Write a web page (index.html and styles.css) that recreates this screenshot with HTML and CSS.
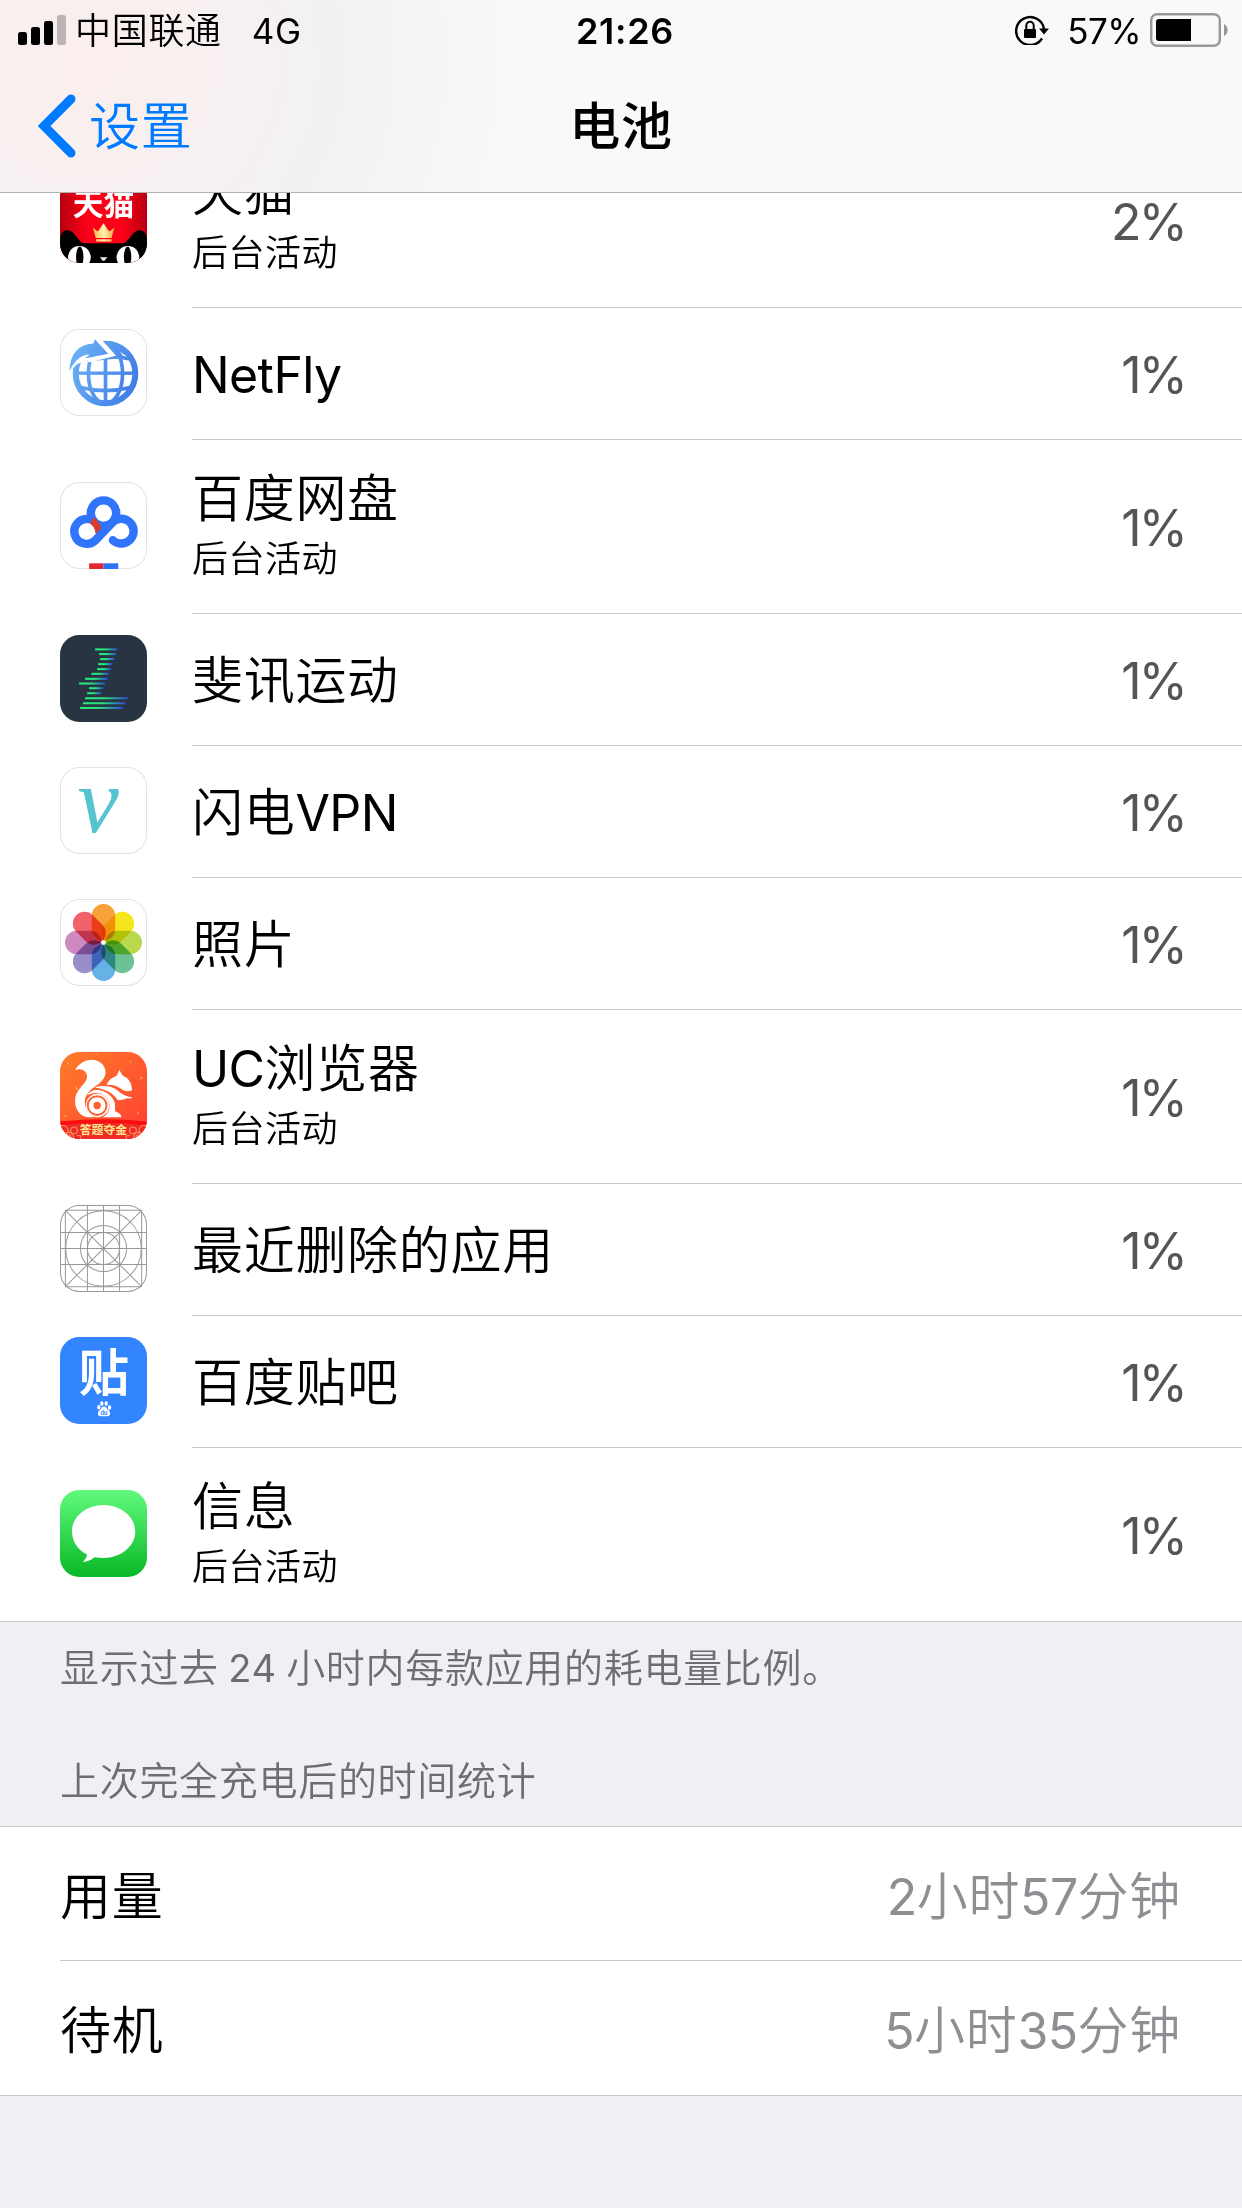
FILE: index.html
```html
<!DOCTYPE html>
<html lang="zh-CN">
<head>
    <meta charset="UTF-8">
    <meta name="viewport" content="width=device-width, initial-scale=1.0">
    <title>电池</title>
    <link rel="stylesheet" href="styles.css">
</head>
<body>
    <header class="header">
        <div class="status-bar">
            <div class="status-left">
                <svg class="signal" viewBox="0 0 48 30">
                    <rect x="0" y="17" width="9" height="13" rx="2.5"/>
                    <rect x="13" y="12" width="9" height="18" rx="2.5"/>
                    <rect x="26" y="6" width="9" height="24" rx="2.5"/>
                    <rect x="39" y="0" width="9" height="30" rx="2.5" fill="#bdb5b5"/>
                </svg>
                <span class="carrier">中国联通</span>
                <span class="network">4G</span>
            </div>
            <div class="status-time">21:26</div>
            <div class="status-right">
                <svg class="lock" viewBox="0 0 34 30">
                    <path d="M27 23.5A14 14 0 1 1 29 14" fill="none" stroke="#000" stroke-width="2.4"/>
                    <path d="M24 13.5h10l-5 6z"/>
                    <rect x="9" y="14" width="12" height="9" rx="1"/>
                    <path d="M11.3 14v-3.5a3.7 3.7 0 0 1 7.4 0V14" fill="none" stroke="#000" stroke-width="2"/>
                </svg>
                <span class="battery-text">57%</span>
                <svg class="battery" viewBox="0 0 78 34">
                    <rect x="1.2" y="1.2" width="68.6" height="31.6" rx="6" fill="none" stroke="#999" stroke-width="2.4"/>
                    <path d="M6 9a3 3 0 0 1 3-3h32v22H9a3 3 0 0 1-3-3z"/>
                    <path d="M74 11q3.6 2 3.6 6t-3.6 6z" fill="#999"/>
                </svg>
            </div>
        </div>
        <nav class="nav-bar">
            <a class="back">
                <svg class="chevron" viewBox="0 0 38 64">
                    <path d="M33 5L6 32l27 27" fill="none" stroke="#007aff" stroke-width="9" stroke-linecap="round"/>
                </svg>
                <span>设置</span>
            </a>
            <h1 class="nav-title">电池</h1>
        </nav>
    </header>

    <ul class="app-list">
        <li class="app app-tall">
            <svg class="icon" viewBox="0 0 260 260">
                <defs>
                    <linearGradient id="tmall">
                        <stop offset="0" stop-color="#b5000f"/>
                        <stop offset=".3" stop-color="#fb0016"/>
                        <stop offset=".72" stop-color="#fb0016"/>
                        <stop offset="1" stop-color="#b5000f"/>
                    </linearGradient>
                    <linearGradient id="gold" x2="1">
                        <stop offset="0" stop-color="#f6b545"/>
                        <stop offset=".5" stop-color="#fff3b0"/>
                        <stop offset="1" stop-color="#f0a53a"/>
                    </linearGradient>
                    <clipPath id="round"><rect width="260" height="260" rx="58"/></clipPath>
                </defs>
                <g clip-path="url(#round)">
                    <rect width="260" height="260" fill="url(#tmall)"/>
                    <text x="38" y="118" class="tmall-text">天猫</text>
                    <path d="M98 154l15 12 17-25 17 25 16-12-9 31h-47zM108 189h46v7h-46z" fill="url(#gold)"/>
                    <path d="M0 190Q2 162 22 162 34 161 48 180 63 201 72 201H188Q197 201 212 180 226 161 238 162 258 163 260 190V260H0z"/>
                    <circle cx="58" cy="243" r="34" fill="#fff"/>
                    <circle cx="203" cy="243" r="34" fill="#fff"/>
                    <ellipse cx="59" cy="242" rx="11" ry="31"/>
                    <ellipse cx="202" cy="242" rx="11" ry="31"/>
                    <path d="M119 241q11 4 23 0l-8 11q-4 3-8 0z" fill="#eee"/>
                </g>
            </svg>
            <div class="app-body">
                <div class="app-text">
                    <div class="app-name">天猫</div>
                    <div class="app-sub">后台活动</div>
                </div>
                <span class="percent">2%</span>
            </div>
        </li>
        <li class="app">
            <svg class="icon" viewBox="0 0 260 260">
                <defs>
                    <linearGradient id="globe" gradientUnits="userSpaceOnUse" x1="28" y1="80" x2="234" y2="160">
                        <stop offset="0" stop-color="#6db3f6"/>
                        <stop offset="1" stop-color="#3f7be6"/>
                    </linearGradient>
                </defs>
                <rect class="edge" x="1.5" y="1.5" width="257" height="257" rx="57"/>
                <g fill="none" stroke="url(#globe)" stroke-width="11">
                    <circle cx="136" cy="133" r="89" stroke-width="18"/>
                    <ellipse cx="136" cy="133" rx="51" ry="90"/>
                    <rect x="130.500" y="40" width="11" height="186" fill="url(#globe)" stroke="none"/>
                    <rect x="44" y="127" width="184" height="10" fill="url(#globe)" stroke="none"/>
                    <path d="M58 174q78 20 156 0M60 90q78-18 154 0"/>
                </g>
                <path d="M130 37Q184 36 208 72l-14 14-80 8L60 94z" fill="url(#globe)"/>
                <path d="M180 68l20 14-12-2z" fill="#fff"/>
                <path d="M97 24L128 36 168 80 86 100 82 94Q46 98 26 136V100Q45 40 103 42z" fill="#fff"/>
                <path d="M104 31l40 43-69 14 14-12Q52 76 28 126 31 47 100 43z" fill="url(#globe)"/>
            </svg>
            <div class="app-body">
                <div class="app-text">
                    <div class="app-name"><span class="latin">NetFly</span></div>
                </div>
                <span class="percent">1%</span>
            </div>
        </li>
        <li class="app app-tall">
            <svg class="icon" viewBox="0 0 260 260">
                <rect class="edge" x="1.5" y="1.5" width="257" height="257" rx="57"/>
                <g fill="none" stroke="#2f74fb" stroke-width="25" stroke-linecap="round">
                    <circle cx="130" cy="93" r="38"/>
                    <path d="M91 114Q112 122 116 152" stroke="#dc3b27" stroke-width="20" stroke-linecap="butt"/>
                    <path d="M84 111A37 37 0 1 0 106 174L154 124A37 37 0 1 1 158 174"/>
                </g>
                <path d="M87 243h43v17H87z" fill="#e32631"/>
                <path d="M130 243h44v17h-44z" fill="#2f70f8"/>
            </svg>
            <div class="app-body">
                <div class="app-text">
                    <div class="app-name">百度网盘</div>
                    <div class="app-sub">后台活动</div>
                </div>
                <span class="percent">1%</span>
            </div>
        </li>
        <li class="app">
            <svg class="icon" viewBox="0 0 260 260">
                <defs>
                    <linearGradient id="bar">
                        <stop offset="0" stop-color="#20f576"/>
                        <stop offset=".45" stop-color="#2be07e"/>
                        <stop offset="1" stop-color="#2a4bd8"/>
                    </linearGradient>
                </defs>
                <rect width="260" height="260" rx="58" fill="#283442"/>
                <g fill="url(#bar)">
                    <rect x="105" y="40" width="66" height="6"/>
                    <rect x="117" y="54" width="51" height="6"/>
                    <rect x="120" y="69" width="42" height="6"/>
                    <rect x="114" y="84" width="42" height="6"/>
                    <rect x="111" y="99" width="42" height="6"/>
                    <rect x="94" y="113" width="51" height="6"/>
                    <rect x="75" y="128" width="67" height="6"/>
                    <rect x="57" y="142" width="78" height="6"/>
                    <rect x="87" y="156" width="42" height="6"/>
                    <rect x="81" y="171" width="42" height="6"/>
                    <rect x="75" y="186" width="127" height="6"/>
                    <rect x="69" y="201" width="127" height="6"/>
                    <rect x="60" y="215" width="127" height="6"/>
                </g>
            </svg>
            <div class="app-body">
                <div class="app-text">
                    <div class="app-name">斐讯运动</div>
                </div>
                <span class="percent">1%</span>
            </div>
        </li>
        <li class="app">
            <svg class="icon" viewBox="0 0 260 260">
                <rect class="edge" x="1.5" y="1.5" width="257" height="257" rx="57"/>
                <text x="52" y="193" class="vpn-text">ν</text>
            </svg>
            <div class="app-body">
                <div class="app-text">
                    <div class="app-name">闪电<span class="latin">VPN</span></div>
                </div>
                <span class="percent">1%</span>
            </div>
        </li>
        <li class="app">
            <svg class="icon" viewBox="0 0 260 260">
                <rect class="edge" x="1.5" y="1.5" width="257" height="257" rx="57"/>
                <g class="petals">
                    <rect x="95" y="15" width="70" height="110" rx="35" fill="#f9a23b"/>
                    <rect x="95" y="15" width="70" height="110" rx="35" fill="#f6e51e" transform="rotate(45 130 130)"/>
                    <rect x="95" y="15" width="70" height="110" rx="35" fill="#b9d84c" transform="rotate(90 130 130)"/>
                    <rect x="95" y="15" width="70" height="110" rx="35" fill="#6cc294" transform="rotate(135 130 130)"/>
                    <rect x="95" y="15" width="70" height="110" rx="35" fill="#66b2e6" transform="rotate(180 130 130)"/>
                    <rect x="95" y="15" width="70" height="110" rx="35" fill="#988fca" transform="rotate(225 130 130)"/>
                    <rect x="95" y="15" width="70" height="110" rx="35" fill="#cc8abf" transform="rotate(270 130 130)"/>
                    <rect x="95" y="15" width="70" height="110" rx="35" fill="#f2606a" transform="rotate(315 130 130)"/>
                </g>
                <circle cx="130" cy="130" r="7" fill="#fff"/>
            </svg>
            <div class="app-body">
                <div class="app-text">
                    <div class="app-name">照片</div>
                </div>
                <span class="percent">1%</span>
            </div>
        </li>
        <li class="app app-tall">
            <svg class="icon" viewBox="0 0 260 260">
                <defs>
                    <linearGradient id="uc" x2="1" y2="1">
                        <stop offset="0" stop-color="#ff7d28"/>
                        <stop offset="1" stop-color="#ff3d33"/>
                    </linearGradient>
                </defs>
                <g clip-path="url(#round)">
                    <rect width="260" height="260" fill="url(#uc)"/>
                    <g fill="#fff">
                        <path d="M45 54C61 25 101 12 125 35C148 60 132 84 112 98C88 113 73 130 74 151C75 173 89 188 104 195H84C62 192 45 174 45 147C45 119 65 105 77 87C89 66 72 45 45 54z"/>
                        <path d="M78 131C104 93 160 123 164 155C166 170 160 179 173 181Q183 186 183 195H128Q150 182 148 158C145 126 108 112 78 131z"/>
                        <path d="M139 98C149 76 160 77 170 70L177 53 187 70C207 78 216 96 215 115Q201 120 189 114C169 99 152 97 139 98z"/>
                        <path d="M103 106C139 95 165 106 179 121Q196 133 216 135Q213 141 200 138Q192 143 173 144C158 124 144 112 103 106z"/>
                        <circle cx="112" cy="160" r="35"/>
                    </g>
                    <circle cx="112" cy="160" r="18" fill="none" stroke="#fff" stroke-width="15"/>
                    <circle cx="111" cy="160" r="28" fill="none" stroke="#ff6030" stroke-width="6"/>
                    <circle cx="111" cy="160" r="11" fill="#ff6030"/>
                    <path d="M109 8l4-6-2 9zM21 28l7 8-4 2zM205 23l9 7-2 3zM242 72l5 8-7 2zM47 99l7 13h-7zM231 176l6 8-5 2zM13 191l8-4-5 9z" fill="#ffb35c"/>
                    <path d="M0 208Q130 194 260 208V260H0z" fill="#f80e12"/>
                    <path d="M0 219Q130 205 260 219V260H0z" fill="#ee2c27"/>
                    <g fill="none" stroke="#ff9661" stroke-width="3">
                        <circle cx="10" cy="234" r="14"/>
                        <circle cx="42" cy="234" r="10"/>
                        <circle cx="26" cy="254" r="14"/>
                        <circle cx="26" cy="254" r="7"/>
                        <circle cx="250" cy="234" r="14"/>
                        <circle cx="218" cy="234" r="10"/>
                        <circle cx="234" cy="254" r="14"/>
                        <circle cx="234" cy="254" r="7"/>
                        <path d="M50 250h12v12M210 250h-12v12"/>
                    </g>
                    <text x="59" y="245" class="uc-text">答题夺金</text>
                </g>
            </svg>
            <div class="app-body">
                <div class="app-text">
                    <div class="app-name"><span class="latin">UC</span>浏览器</div>
                    <div class="app-sub">后台活动</div>
                </div>
                <span class="percent">1%</span>
            </div>
        </li>
        <li class="app">
            <svg class="icon" viewBox="0 0 260 260">
                <g fill="none" stroke="#999" stroke-width="3">
                    <rect x="1.500" y="1.500" width="257" height="257" rx="57"/>
                    <path d="M16 16V244M82 2V258M130 2V258M178 2V258M244 16V244"/>
                    <path d="M16 16H244M2 82H258M2 130H258M2 178H258M16 244H244"/>
                    <path d="M16 16L244 244M244 16L16 244"/>
                    <circle cx="130" cy="130" r="113"/>
                    <circle cx="130" cy="130" r="69"/>
                    <circle cx="130" cy="130" r="48"/>
                </g>
            </svg>
            <div class="app-body">
                <div class="app-text">
                    <div class="app-name">最近删除的应用</div>
                </div>
                <span class="percent">1%</span>
            </div>
        </li>
        <li class="app">
            <svg class="icon" viewBox="0 0 260 260">
                <rect width="260" height="260" rx="58" fill="#3385ff"/>
                <text x="56" y="161" class="tieba-text">贴</text>
                <g fill="#fff">
                    <ellipse cx="116" cy="210" rx="5" ry="7"/>
                    <ellipse cx="125" cy="199" rx="5" ry="7"/>
                    <ellipse cx="138" cy="199" rx="5" ry="7"/>
                    <ellipse cx="148" cy="211" rx="5" ry="7"/>
                    <path d="M131 208q7 0 10 7 9 6 9 13 0 9-10 9h-17q-10 0-10-9 0-6 9-13 3-7 9-7z"/>
                </g>
                <text x="121" y="233" class="paw-text">du</text>
            </svg>
            <div class="app-body">
                <div class="app-text">
                    <div class="app-name">百度贴吧</div>
                </div>
                <span class="percent">1%</span>
            </div>
        </li>
        <li class="app app-tall app-last">
            <svg class="icon" viewBox="0 0 260 260">
                <defs>
                    <linearGradient id="msg" x2="0" y2="1">
                        <stop offset="0" stop-color="#60fa7c"/>
                        <stop offset="1" stop-color="#09b826"/>
                    </linearGradient>
                </defs>
                <rect width="260" height="260" rx="58" fill="url(#msg)"/>
                <path d="M130 45C182 45 225 80 225 124S182 203 130 203Q117 203 103 201 88 214 69 215 80 205 81 193C54 180 36 155 36 124 36 80 78 45 130 45z" fill="#fff"/>
            </svg>
            <div class="app-body">
                <div class="app-text">
                    <div class="app-name">信息</div>
                    <div class="app-sub">后台活动</div>
                </div>
                <span class="percent">1%</span>
            </div>
        </li>
    </ul>

    <p class="note">显示过去 <span class="note-num">24</span> 小时内每款应用的耗电量比例。</p>
    <h2 class="section-title">上次完全充电后的时间统计</h2>

    <div class="stats">
        <div class="stat">
            <span>用量</span>
            <span class="stat-value"><span class="latin">2</span>小时<span class="latin">57</span>分钟</span>
        </div>
        <div class="stat">
            <span>待机</span>
            <span class="stat-value"><span class="latin">5</span>小时<span class="latin">35</span>分钟</span>
        </div>
    </div>
</body>
</html>
```

FILE: styles.css
```css
* {
    margin: 0;
    padding: 0;
    box-sizing: border-box;
}
body {
    width: 1242px;
    height: 2208px;
    overflow: hidden;
    background: #efeff4;
    color: #000;
    font-family: "Noto Sans CJK SC", sans-serif;
    font-size: 51px;
    font-weight: 350;
    letter-spacing: 0.7px;
}
svg {
    display: block;
    flex-shrink: 0;
}
.latin {
    font-family: Inter, sans-serif;
    font-size: 50px;
    font-weight: 400;
    letter-spacing: -0.6px;
}

/* 顶部 */
.header {
    position: relative;
    z-index: 1;
    height: 193px;
    border-bottom: 1px solid #b2b2b2;
    background: radial-gradient(circle at 90px 60px, #fbeeee 0, #f8f0f0 120px, #f2f1f2 240px, rgba(249, 249, 249, 0) 430px), #f9f9f9;
}
.status-bar {
    display: grid;
    grid-template-columns: 1fr auto 1fr;
    align-items: center;
    height: 60px;
    padding: 0 14px 0 18px;
    font-size: 36px;
    line-height: 56px;
}
.status-left,
.status-right {
    display: flex;
    align-items: center;
}
.status-right {
    justify-content: flex-end;
}
.signal {
    width: 48px;
    height: 30px;
}
.carrier {
    margin-left: 9px;
    padding-bottom: 4px;
}
.network {
    margin-left: 30px;
    font-family: Inter, sans-serif;
    font-size: 35px;
    font-weight: 400;
    padding-top: 2px;
}
.status-time {
    padding: 1px 0 0 4px;
    font-family: Inter, sans-serif;
    font-size: 36px;
    font-weight: 600;
}
.lock {
    width: 34px;
    height: 30px;
}
.battery-text {
    margin: 0 9px 0 18px;
    padding-top: 2px;
    font-family: Inter, sans-serif;
    font-size: 35px;
    font-weight: 400;
    letter-spacing: -0.6px;
}
.battery {
    width: 78px;
    height: 34px;
    margin-bottom: 1px;
}
.nav-bar {
    display: grid;
    grid-template-columns: 1fr auto 1fr;
    align-items: center;
    height: 132px;
    padding: 0 38px;
    line-height: 126px;
}
.back {
    display: flex;
    align-items: center;
    gap: 13px;
    color: #007aff;
}
.back span,
.nav-title {
    padding-bottom: 6px;
}
.chevron {
    width: 38px;
    height: 64px;
}
.nav-title {
    font-size: 51px;
    font-weight: 500;
}

/* 应用耗电列表 */
.app-list {
    margin-top: -59px;
    list-style: none;
    background: #fff;
    border-bottom: 1px solid #c8c7cc;
}
.app {
    display: flex;
    height: 132px;
    padding-left: 60px;
}
.app-tall {
    height: 174px;
}
.app-last {
    height: 173px;
}
.icon {
    width: 87px;
    height: 87px;
    margin-top: 21px;
    overflow: visible;
}
.app-tall .icon {
    margin-top: 42px;
}
.edge {
    fill: #fff;
    stroke: #e3e3e3;
    stroke-width: 3;
}
.app-body {
    flex: 1;
    display: flex;
    align-items: center;
    justify-content: space-between;
    margin-left: 45px;
    padding-right: 57px;
    border-bottom: 1px solid #c8c7cc;
}
.app-last .app-body {
    border-bottom: none;
}
.app-text {
    padding-bottom: 5px;
}
.app-tall .app-text {
    padding-bottom: 10px;
}
.app-name {
    height: 66px;
    line-height: 66px;
}
.app-sub {
    height: 50px;
    margin-top: 3px;
    font-size: 36px;
    line-height: 50px;
    letter-spacing: 0.5px;
}
.percent {
    padding-top: 3px;
    color: #555;
    font-family: Inter, sans-serif;
    font-size: 50px;
    font-weight: 400;
    letter-spacing: -2.8px;
}
.tmall-text {
    font-size: 92px;
    font-weight: 700;
    letter-spacing: 0;
    fill: #fff;
}
.vpn-text {
    font-family: "Liberation Serif", serif;
    font-size: 278px;
    font-style: italic;
    fill: #55c3d0;
}
.petals rect {
    mix-blend-mode: multiply;
}
.uc-text {
    font-size: 35.500px;
    font-weight: 700;
    letter-spacing: 0;
    fill: #ffe98a;
}
.tieba-text {
    font-size: 150px;
    font-weight: 700;
    fill: #fff;
}
.paw-text {
    font-family: Inter, sans-serif;
    font-size: 17px;
    font-weight: 700;
    letter-spacing: 0;
    fill: #3385ff;
}

/* 说明文字 */
.note,
.section-title {
    padding-left: 60px;
    color: #6d6d72;
    font-size: 39px;
    font-weight: 350;
    line-height: 56px;
    letter-spacing: 0.7px;
}
.note {
    height: 128px;
    padding-top: 15px;
}
.note-num {
    font-family: Inter, sans-serif;
    font-size: 38px;
    font-weight: 400;
}
.section-title {
    height: 76px;
}

/* 时间统计 */
.stats {
    border-top: 1px solid #c8c7cc;
    border-bottom: 1px solid #c8c7cc;
    background: #fff;
}
.stat {
    display: flex;
    align-items: center;
    justify-content: space-between;
    height: 133px;
    margin-left: 60px;
    padding: 0 61px 2px 0;
}
.stat + .stat {
    height: 135px;
    border-top: 1px solid #c8c7cc;
}
.stat-value {
    color: #8e8e93;
}
```
